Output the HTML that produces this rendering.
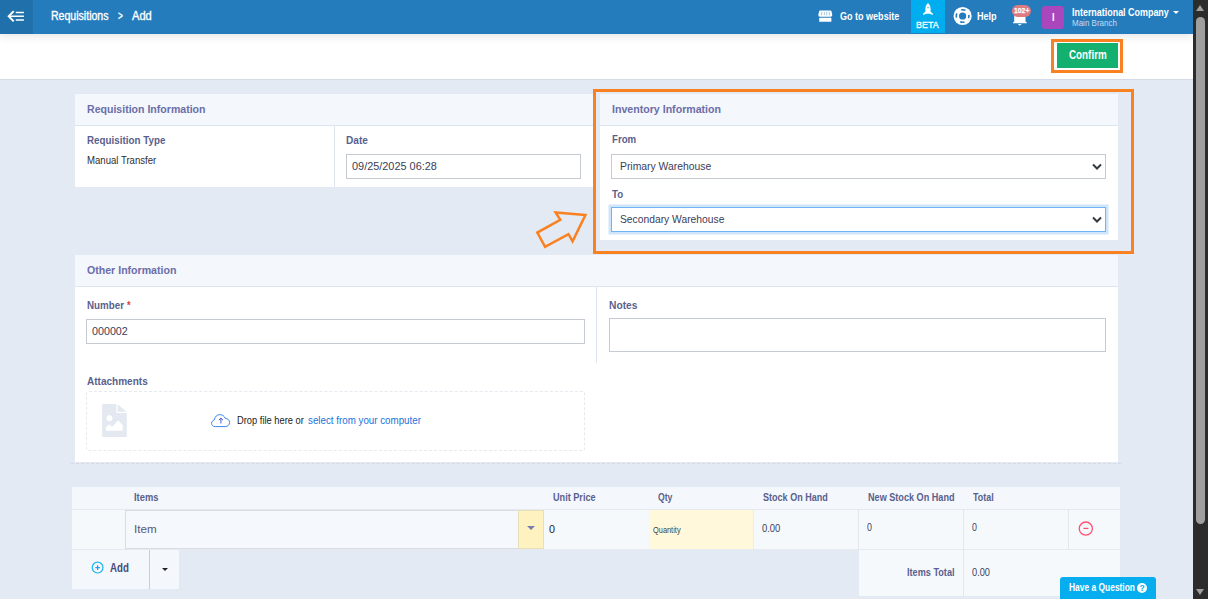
<!DOCTYPE html>
<html><head><meta charset="utf-8"><title>Requisitions - Add</title>
<style>
*{box-sizing:border-box;margin:0;padding:0}
html,body{width:1208px;height:599px;overflow:hidden}
body{font-family:"Liberation Sans",sans-serif;background:#e4eaf3;position:relative;color:#333;font-size:12px}
.abs{position:absolute}
.t{position:absolute;white-space:nowrap;line-height:1;transform-origin:0 0}
.b{font-weight:normal;-webkit-text-stroke:.35px currentColor}
.w{color:#fff}
.bb{font-weight:bold}
#topbar{left:0;top:0;width:1193px;height:34px;background:#247cbd;box-shadow:0 2px 9px rgba(0,0,0,.11)}
#menu{left:0;top:0;width:33px;height:34px;background:#2070ab}
#subbar{left:0;top:34px;width:1193px;height:46px;background:#fff;border-bottom:1px solid #d4dbe6}
.card{position:absolute;background:#fff}
.chead{position:absolute;left:0;top:0;right:0;height:32px;background:#f4f7fb;border-bottom:1px solid #dde5f0}
.ctitle{color:#6b6ea9;font-weight:bold;font-size:11.5px}
.lbl{color:#5a5f8e;font-weight:bold;font-size:11.5px}
.inp{position:absolute;background:#fff;border:1px solid #c5cad3}
.val{font-size:11.5px;color:#3a4058}
.th{font-size:10px;font-weight:bold;color:#5a5f8e}
#sb{left:1193px;top:0;width:15px;height:599px;background:#2c2c2c}
</style></head><body>
<!-- ===== top bar ===== -->
<div class="abs" id="subbar"></div>
<div class="abs" id="topbar"></div>
<div class="abs" id="menu"></div>
<svg class="abs" style="left:6px;top:9px" width="20" height="14" viewBox="6 9 20 14"><path d="M15.800 12.550h8.100M9.500 16.250h14.400M15.800 20h8.100" stroke="#fff" stroke-width="1.600" fill="none"></path><path d="M13.700 11.100L8.700 16.300L13.700 21.400" stroke="#fff" stroke-width="2" fill="none" stroke-linecap="butt" stroke-linejoin="miter"></path></svg>
<span class="t b w" id="bc1" style="left: 50.5px; top: 10.01px; font-size: 12px; transform: scaleX(0.8796);">Requisitions</span>
<span class="t b w" id="bc2" style="left: 117.7px; top: 10.01px; font-size: 12px; transform: scaleX(0.6857);">&gt;</span>
<span class="t b w" id="bc3" style="left: 131.7px; top: 10.01px; font-size: 12px; transform: scaleX(0.9237);">Add</span>

<span class="t bb w" id="gw" style="left: 840.3px; top: 11.01px; font-size: 11px; transform: scaleX(0.8208);">Go to website</span>
<div class="abs" style="left:911px;top:0;width:34px;height:33px;background:#00aeef"></div>
<span class="t w" id="beta" style="font-size: 9.6px; -webkit-text-stroke: 0.3px rgb(255, 255, 255); left: 916.3px; top: 20.02px; transform: scaleX(0.934);">BETA</span>
<span class="t bb w" id="help" style="left: 977.2px; top: 11.01px; font-size: 11px; transform: scaleX(0.8251);">Help</span>
<div class="abs" style="left:1042px;top:6px;width:22px;height:23px;background:#ab47bc;border-radius:3px"></div>
<span class="t bb w" id="av" style="font-size: 11.5px; left: 1051.7px; top: 12px; transform: scaleX(0.8);">I</span>
<span class="t bb w" id="co" style="left: 1071.7px; top: 7.01px; font-size: 11px; transform: scaleX(0.8121);">International Company</span>
<span class="t" id="mb" style="font-size: 8.5px; color: rgb(198, 221, 241); left: 1071.7px; top: 19px; transform: scaleX(0.9419);">Main Branch</span>
<div class="abs" style="left:1173px;top:11px;width:0;height:0;border-left:3px solid transparent;border-right:3px solid transparent;border-top:3px solid #fff"></div>


<!-- store icon -->
<svg class="abs" style="left:817px;top:9px" width="17" height="14" viewBox="817 9 17 14"><path d="M820.2 10.4h10.2q.7 0 1 .7l.9 3.6q.1 2.1-1.6 2.1h-10.8q-1.7 0-1.6-2.1l.9-3.600q.3-.7 1-.7z" fill="#fff"></path><g fill="#247cbd" opacity=".42"><path d="M821.4 11.8h.9l-.3 3.400h-1.2z"></path><path d="M823.9 11.800h.9v3.400h-1z"></path><path d="M826.200 11.800h.9l.1 3.400h-1z"></path><path d="M828.600 11.800h.9l.6 3.400h-1.200z"></path></g><rect x="819.200" y="17.800" width="12.200" height="4" rx=".6" fill="#fff"></rect></svg>
<!-- rocket -->
<svg class="abs" style="left:921px;top:2px" width="14" height="14" viewBox="921 2 14 14"><path d="M928 2.900c2.400 2 3 5.200 2.500 8.500l2.400 2.400v1.100l-3.200-1.100h-3.400l-3.200 1.100v-1.100l2.400-2.400c-.5-3.300.1-6.500 2.500-8.500z" fill="#fff"></path><circle cx="928" cy="7.600" r=".9" fill="#5cc8f4"></circle></svg>
<!-- help lifebuoy -->
<svg class="abs" style="left:952px;top:5px" width="22" height="22" viewBox="952 5 22 22"><circle cx="962.600" cy="16" r="9.100" fill="#fff"></circle><circle cx="962.600" cy="16" r="3.600" fill="#247cbd"></circle><circle cx="962.600" cy="16" r="6.300" fill="none" stroke="#247cbd" stroke-width="1.600" stroke-dasharray="4.400 5.496" stroke-dashoffset="2.200"></circle></svg>
<!-- bell + badge -->
<svg class="abs" style="left:1010px;top:3px" width="24" height="25" viewBox="1010 3 24 25"><path d="M1014.200 12h11.300v9.400l1.300 1v.9h-13.800v-.9l1.200-1z" fill="#fff"></path><path d="M1017.900 24.100h3.700l-1.850 1.700z" fill="#fff"></path><rect x="1011.900" y="5" width="19.100" height="12" rx="6" fill="#dc7b82"></rect></svg>
<span class="t bb w" id="bd" style="font-size: 7px; -webkit-text-stroke: 0.25px rgb(255, 255, 255); left: 1014.1px; top: 7.02px; transform: scaleX(0.9758);">102+</span>

<!-- ===== sub bar ===== -->
<div class="abs" style="left:1051px;top:39px;width:72px;height:34px;border:3px solid #fa8122"></div>
<div class="abs" style="left:1057px;top:43px;width:61px;height:25px;background:#13b06f"></div>
<span class="t bb w" id="cf" style="left: 1069.1px; top: 49.01px; font-size: 12px; transform: scaleX(0.8196);">Confirm</span>

<!-- ===== card 1 ===== -->
<div class="card" style="left:75px;top:94px;width:520px;height:93px">
  <div class="chead"></div>
  <div class="abs" style="left:259px;top:31px;width:1px;height:62px;background:#dde5f0"></div>
</div>
<span class="t ctitle" id="c1t" style="left: 86.5px; top: 104px; transform: scaleX(0.9184);">Requisition Information</span>
<span class="t lbl" id="rt" style="left: 86.5px; top: 135px; transform: scaleX(0.8534);">Requisition Type</span>
<span class="t" id="mt" style="font-size: 10px; color: rgb(46, 46, 46); left: 86.5px; top: 156.02px; transform: scaleX(0.9575);">Manual Transfer</span>
<span class="t lbl" id="dt" style="left: 346px; top: 135px; transform: scaleX(0.8765);">Date</span>
<div class="inp" style="left:346px;top:154px;width:235px;height:25px"></div>
<span class="t val" id="dv" style="left: 351.5px; top: 161px; transform: scaleX(0.948);">09/25/2025 06:28</span>

<!-- ===== inventory card ===== -->
<div class="card" style="left:600px;top:94px;width:518px;height:146px">
  <div class="chead"></div>
</div>
<span class="t ctitle" id="c2t" style="left: 611.6px; top: 104px; transform: scaleX(0.9224);">Inventory Information</span>
<span class="t lbl" id="fr" style="left: 611.6px; top: 134.01px; transform: scaleX(0.8414);">From</span>
<div class="inp" style="left:611px;top:154px;width:495px;height:25px"></div>
<span class="t val" id="pw" style="left: 620.1px; top: 161px; transform: scaleX(0.9019);">Primary Warehouse</span>
<span class="t lbl" id="to" style="left: 611.6px; top: 189px; transform: scaleX(0.8428);">To</span>
<div class="inp" style="left:611px;top:207px;width:495px;height:25px;border-color:#72b3f3;box-shadow:0 0 0 2.5px rgba(110,175,245,.33)"></div>
<span class="t val" id="sw" style="left: 620.1px; top: 214.01px; transform: scaleX(0.8953);">Secondary Warehouse</span>
<svg class="abs" style="left:1091px;top:161.5px" width="12" height="10" viewBox="0 0 12 10"><path d="M2 2.5L6 6.5L10 2.5" fill="none" stroke="#343a40" stroke-width="2"></path></svg>
<svg class="abs" style="left:1091px;top:214.5px" width="12" height="10" viewBox="0 0 12 10"><path d="M2 2.5L6 6.5L10 2.5" fill="none" stroke="#343a40" stroke-width="2"></path></svg>
<!-- orange frame + arrow -->
<div class="abs" style="left:593px;top:89px;width:541px;height:165px;border:3px solid #fa8122"></div>
<svg class="abs" style="left:530px;top:205px" width="64" height="50" viewBox="530 205 64 50"><path d="M585.4 215.1L555.6 212.4L560.3 219.8L537.3 232.6L545.1 246.9L568.5 234.2L572.6 241.4Z" fill="none" stroke="#fa8122" stroke-width="2.5" stroke-linejoin="miter"></path></svg>

<!-- ===== other card ===== -->
<div class="card" style="left:75px;top:255px;width:1043px;height:207px">
  <div class="chead"></div>
  <div class="abs" style="left:521px;top:31px;width:1px;height:77px;background:#dde5f0"></div>
</div>
<span class="t ctitle" id="c3t" style="left: 86.6px; top: 265px; transform: scaleX(0.9208);">Other Information</span>
<span class="t lbl" id="nm" style="left: 86.6px; top: 300px; transform: scaleX(0.8505);">Number</span><span class="t lbl" id="nms" style="color: rgb(229, 57, 53); left: 127px; top: 300px; transform: scaleX(0.8);">*</span>
<div class="inp" style="left:86px;top:319px;width:499px;height:25px"></div>
<span class="t val" id="nv" style="left: 92.1px; top: 326px; transform: scaleX(0.9321);">000002</span>
<span class="t lbl" id="nt" style="left: 608.6px; top: 300px; transform: scaleX(0.8905);">Notes</span>
<div class="inp" style="left:609px;top:318px;width:497px;height:34px"></div>
<span class="t lbl" id="at" style="left: 86.6px; top: 376px; transform: scaleX(0.8721);">Attachments</span>
<div class="abs" style="left:86px;top:391px;width:499px;height:60px;border:1px dashed #e6e9f0;border-radius:3px"></div>
<span class="t" id="df" style="font-size: 10px; color: rgb(34, 34, 34); left: 236.5px; top: 416.01px; transform: scaleX(0.9327);">Drop file here or</span><span class="t" id="df2" style="font-size: 10px; color: rgb(26, 115, 217); left: 308px; top: 416.01px; transform: scaleX(0.9771);">select from your computer</span>


<!-- file icon -->
<svg class="abs" style="left:101px;top:403px" width="27" height="35" viewBox="101 403 27 35"><path d="M103.200 404h13.200v8.900h10.400v23.200q0 1-1 1h-22.600q-1 0-1-1v-31.100q0-1 1-1z" fill="#e3e8f1"></path><path d="M117.600 404.300l8.900 7.500h-8.900z" fill="#e3e8f1"></path><circle cx="109.500" cy="418.200" r="3" fill="#fff"></circle><path d="M105.900 430.800v-3.300l3.300-3.300 2.800 2.600 6.200-6.300 4.500 4.600v5.700z" fill="#fff"></path></svg>
<!-- cloud upload -->
<svg class="abs" style="left:210px;top:412px" width="22" height="17" viewBox="210 412 22 17"><path d="M215.200 426.600c-2.200 0-3.600-1.500-3.600-3.300 0-1.700 1.100-2.900 2.600-3.200.5-3.300 2.700-5.500 5.600-5.500 2.600 0 4.500 1.500 5.300 3.700 2.500.1 4.500 1.800 4.500 4.200 0 2.400-1.900 4.100-4.400 4.100z" fill="#fff" stroke="#3d85f0" stroke-width="1"></path><path d="M220.900 423.500v-5M218.800 420.200l2.100-2.100 2.100 2.100" fill="none" stroke="#4b57d9" stroke-width="1"></path></svg>

<div class="abs" style="left:71px;top:463px;width:1050px;height:0;border-top:1px dashed #d3dae6"></div>
<!-- ===== items table ===== -->
<div class="abs" style="left:72px;top:487px;width:1048px;height:23px;background:#f4f7fb"></div>
<div class="abs" style="left:72px;top:510px;width:1048px;height:39px;background:#f6f9fc"></div>
<span class="t th" id="h1" style="left: 133.5px; top: 493px; transform: scaleX(0.9337);">Items</span>
<span class="t th" id="h2" style="left: 553px; top: 493px; transform: scaleX(0.9126);">Unit Price</span>
<span class="t th" id="h3" style="left: 658px; top: 493px; transform: scaleX(0.8651);">Qty</span>
<span class="t th" id="h4" style="left: 763.1px; top: 493px; transform: scaleX(0.9041);">Stock On Hand</span>
<span class="t th" id="h5" style="left: 867.7px; top: 493px; transform: scaleX(0.9104);">New Stock On Hand</span>
<span class="t th" id="h6" style="left: 973.1px; top: 493px; transform: scaleX(0.8945);">Total</span>
<div class="abs" style="left:125px;top:510px;width:394px;height:39px;background:#f5f8fc;border:1px solid #d9dde3"></div>
<span class="t" id="it" style="font-size: 11.5px; color: rgb(85, 90, 117); left: 134.08px; top: 524.01px; transform: scaleX(1.0151);">Item</span>
<div class="abs" style="left:518px;top:510px;width:26px;height:39px;background:#fdf2c0;border:1px solid #e6dfb9"></div>
<div class="abs" style="left:527px;top:526px;width:0;height:0;border-left:4px solid transparent;border-right:4px solid transparent;border-top:4px solid #7a7db3"></div>
<span class="t" id="up" style="font-size: 11.5px; color: rgb(34, 34, 34); left: 548.6px; top: 524px; transform: scaleX(0.9333);">0</span>
<div class="abs" style="left:649px;top:510px;width:104px;height:39px;background:#fff8db"></div>
<span class="t" id="qt" style="left: 653.2px; top: 526.01px; font-size: 9px; color: rgb(68, 68, 68); transform: scaleX(0.8231);">Quantity</span>
<span class="t" id="v1" style="left: 762px; top: 524.01px; font-size: 10px; color: rgb(58, 63, 92); transform: scaleX(0.9396);">0.00</span>
<span class="t" id="v2" style="left: 866.5px; top: 523.01px; font-size: 10px; color: rgb(58, 63, 92); transform: scaleX(0.8833);">0</span>
<span class="t" id="v3" style="left: 971.7px; top: 523.01px; font-size: 10px; color: rgb(58, 63, 92); transform: scaleX(0.8833);">0</span>
<!-- footer -->
<div class="abs" style="left:859px;top:550px;width:261px;height:46px;background:#f6f9fc"></div>
<span class="t th" id="itot" style="left: 907px; top: 568.02px; transform: scaleX(0.9126);">Items Total</span>
<span class="t" id="v4" style="left: 972px; top: 568.02px; font-size: 10px; color: rgb(58, 63, 92); transform: scaleX(0.9246);">0.00</span>

<div class="abs" style="left:72px;top:509px;width:1048px;height:1px;background:#e6eaf0"></div>
<div class="abs" style="left:72px;top:549px;width:1048px;height:1px;background:#e6eaf0"></div>
<div class="abs" style="left:753px;top:510px;width:1px;height:39px;background:#e9ecf1"></div>
<div class="abs" style="left:858px;top:510px;width:1px;height:39px;background:#e3e7ec"></div>
<div class="abs" style="left:963px;top:510px;width:1px;height:86px;background:#e3e7ec"></div>
<div class="abs" style="left:1068px;top:510px;width:1px;height:39px;background:#e3e7ec"></div>
<!-- add button -->
<div class="abs" style="left:72px;top:550px;width:107px;height:39px;background:#f4f7fb"></div>
<div class="abs" style="left:149px;top:550px;width:1px;height:39px;background:#c9ced6"></div>
<span class="t b" id="add" style="font-size: 12px; color: rgb(71, 76, 124); font-weight: bold; -webkit-text-stroke: 0px; left: 110.4px; top: 562.01px; transform: scaleX(0.8088);">Add</span>
<div class="abs" style="left:162px;top:568px;width:0;height:0;border-left:3px solid transparent;border-right:3px solid transparent;border-top:3px solid #222"></div>

<!-- have a question -->
<div class="abs" style="left:1060px;top:577px;width:96px;height:22px;background:#06aeef;border-radius:3px 3px 0 0"></div>
<span class="t bb w" id="hq" style="left: 1068.8px; top: 583.02px; font-size: 10px; transform: scaleX(0.8422);">Have a Question</span>


<!-- add icon -->
<svg class="abs" style="left:91px;top:561px" width="14" height="14" viewBox="91 561 14 14"><circle cx="97.600" cy="567.600" r="5.400" fill="none" stroke="#1ab4f0" stroke-width="1.200"></circle><path d="M95.300 567.600h4.600M97.600 565.300v4.600" stroke="#1a9ff0" stroke-width="1.200"></path></svg>
<!-- remove icon -->
<svg class="abs" style="left:1077px;top:520px" width="18" height="18" viewBox="1077 520 18 18"><circle cx="1085.800" cy="528.600" r="6.600" fill="none" stroke="#ff4f70" stroke-width="1.300"></circle><path d="M1083.400 528.400h5" stroke="#ff4f70" stroke-width="1.300"></path></svg>
<!-- question icon -->
<svg class="abs" style="left:1136px;top:582px" width="12" height="12" viewBox="1136 582 12 12"><circle cx="1142" cy="588" r="5" fill="#fff"></circle><text x="1142" y="591.200" font-family="Liberation Sans" font-weight="bold" font-size="8.500" fill="#06aeef" text-anchor="middle">?</text></svg>

<!-- ===== scrollbar ===== -->
<div class="abs" id="sb"></div>
<div class="abs" style="left:1196px;top:17px;width:9px;height:507px;background:#9f9f9f;border-radius:4.5px"></div>
<div class="abs" style="left:1196px;top:5px;width:0;height:0;border-left:4.5px solid transparent;border-right:4.5px solid transparent;border-bottom:6.5px solid #9f9f9f"></div>
<div class="abs" style="left:1196px;top:589px;width:0;height:0;border-left:4.5px solid transparent;border-right:4.5px solid transparent;border-top:6.5px solid #9f9f9f"></div>

</body></html>
